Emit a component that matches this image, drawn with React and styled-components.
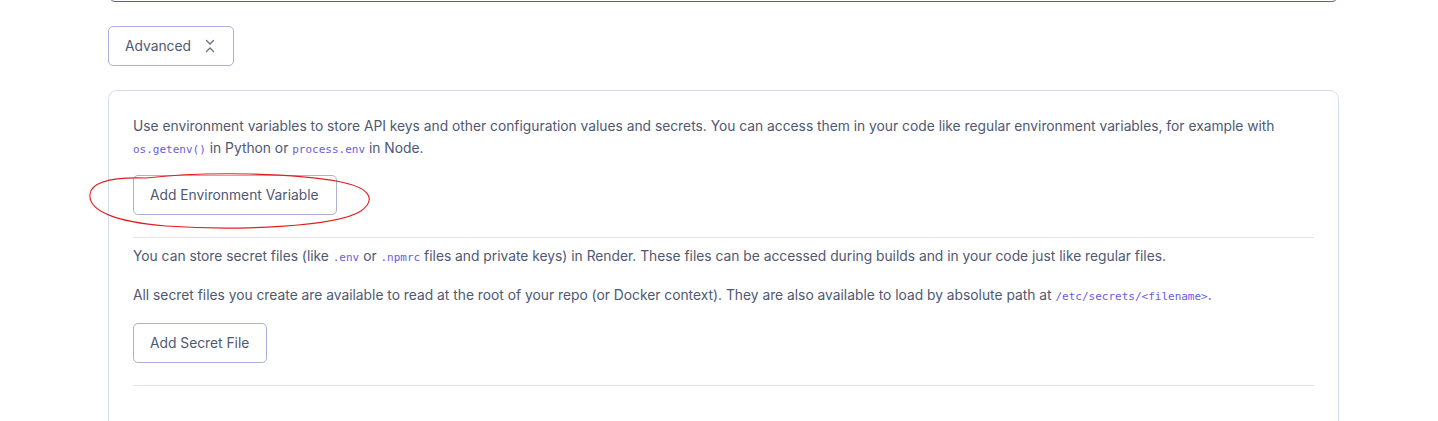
import React from "react";
import styled, { createGlobalStyle } from "styled-components";

const Global = createGlobalStyle`
  html, body { margin: 0; padding: 0; background: #ffffff; }
  body { font-family: Inter, "Noto Sans", sans-serif; -webkit-font-smoothing: antialiased; }
`;

const Page = styled.div`
  width: 1438px;
  height: 421px;
  overflow: hidden;
  padding: 0 99px 0 108px;
  box-sizing: border-box;
  position: relative;
`;

const TopPanel = styled.div`
  height: 40px;
  margin-top: -38px;
  margin-left: 1px;
  margin-right: 1px;
  border: 1.5px solid #5b54e0;
  border-radius: 6px;
  box-sizing: border-box;
`;

const Toggle = styled.button`
  display: inline-flex;
  align-items: center;
  gap: 13px;
  height: 40px;
  margin-top: 24px;
  padding: 0 17px 0 16px;
  border: 1px solid #a9b2d6;
  border-radius: 5px;
  background: #fff;
  color: #4f5872;
  font-family: Inter, "Noto Sans", sans-serif;
  font-size: 13.8px;
  cursor: pointer;
`;

const Card = styled.div`
  margin-top: 24px;
  border: 1px solid #d3ddf2;
  border-radius: 9px;
  padding: 24px 24px 60px 24px;
  box-sizing: border-box;
`;

const Text = styled.p`
  margin: 0 0 ${(p) => p.$mb || 0}px 0;
  font-size: 13.8px;
  line-height: 22px;
  color: #4f5872;
`;

const Code = styled.code`
  font-family: "DejaVu Sans Mono", "Liberation Mono", monospace;
  font-size: 11px;
  line-height: 1;
  color: #6a5be4;
`;

const ActionButton = styled.button`
  display: inline-flex;
  align-items: center;
  height: 40px;
  padding: 0 17px 0 16px;
  border: 1px solid #a9b2d6;
  border-radius: 5px;
  background: #fff;
  color: #4f5872;
  font-family: Inter, "Noto Sans", sans-serif;
  font-size: 13.8px;
  cursor: pointer;
`;

const Divider = styled.hr`
  border: 0;
  border-top: 1px solid #e1e3e8;
  margin: ${(p) => p.$mt || 0}px 0 ${(p) => p.$mb || 0}px 0;
`;

const Annotation = styled.svg`
  position: absolute;
  left: 86px;
  top: 169px;
  pointer-events: none;
`;

function ChevronsDownUp() {
  return (
    <svg width="12" height="14" viewBox="0 0 12 14" fill="none" stroke="#6b7386" strokeWidth="1.4" strokeLinecap="round" strokeLinejoin="round">
      <path d="M2.5 1.5 L6 5 L9.5 1.5" />
      <path d="M2.5 12.5 L6 9 L9.5 12.5" />
    </svg>
  );
}

export default function App() {
  return (
    <>
      <Global />
      <Page>
        <TopPanel />
        <Toggle>
          Advanced
          <ChevronsDownUp />
        </Toggle>
        <Card>
          <Text $mb={16}>
            Use environment variables to store API keys and other configuration values and secrets. You can access them in your code like regular environment variables, for example with{" "}
            <Code>os.getenv()</Code> in Python or <Code>process.env</Code> in Node.
          </Text>
          <ActionButton>Add Environment Variable</ActionButton>
          <Divider $mt={22} $mb={7} />
          <Text $mb={17}>
            You can store secret files (like <Code>.env</Code> or <Code>.npmrc</Code> files and private keys) in Render. These files can be accessed during builds and in your code just like regular files.
          </Text>
          <Text $mb={17}>
            All secret files you create are available to read at the root of your repo (or Docker context). They are also available to load by absolute path at <Code>/etc/secrets/&lt;filename&gt;</Code>.
          </Text>
          <ActionButton>Add Secret File</ActionButton>
          <Divider $mt={22} $mb={0} />
        </Card>
        <Annotation width="290" height="64" viewBox="0 0 290 64">
          <path
            d="M60 9 C120 2, 210 4, 255 13 C285 19, 290 31, 275 42 C250 58, 150 62, 80 57 C30 53, 2 42, 4 25 C6 12, 30 8, 60 9 Z"
            fill="none"
            stroke="#e02020"
            strokeWidth="1.1"
          />
        </Annotation>
      </Page>
    </>
  );
}
